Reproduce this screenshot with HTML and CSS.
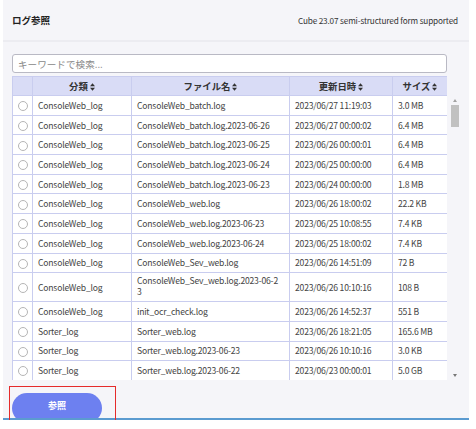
FILE: index.html
```html
<!DOCTYPE html>
<html lang="ja">
<head>
    <meta charset="UTF-8">
    <meta name="viewport" content="width=device-width, initial-scale=1.0">
    <title>ログ参照</title>
    <link rel="stylesheet" href="styles.css">
</head>
<body>
    <div class="panel">
        <div class="panel-head">
            <h1>ログ参照</h1>
            <span class="version">Cube 23.07 semi-structured form supported</span>
        </div>
        <div class="panel-body">
            <input type="text" class="search" placeholder="キーワードで検索...">
            <div class="table-area">
                <div class="table-box">
                    <table class="log-table">
                        <colgroup>
                            <col class="c-radio">
                            <col class="c-type">
                            <col class="c-file">
                            <col class="c-date">
                            <col class="c-size">
                        </colgroup>
                        <thead>
                            <tr>
                                <th></th>
                                <th>分類<svg class="sort" viewBox="0 0 6 9"><path d="M3 0 6 3.6H0z M3 9 0 5.4h6z"/></svg></th>
                                <th>ファイル名<svg class="sort" viewBox="0 0 6 9"><path d="M3 0 6 3.6H0z M3 9 0 5.4h6z"/></svg></th>
                                <th>更新日時<svg class="sort" viewBox="0 0 6 9"><path d="M3 0 6 3.6H0z M3 9 0 5.4h6z"/></svg></th>
                                <th>サイズ<svg class="sort" viewBox="0 0 6 9"><path d="M3 0 6 3.6H0z M3 9 0 5.4h6z"/></svg></th>
                            </tr>
                        </thead>
                        <tbody>
                            <tr><td><span class="radio"></span></td><td>ConsoleWeb_log</td><td>ConsoleWeb_batch.log</td><td>2023/06/27 11:19:03</td><td>3.0 MB</td></tr>
                            <tr><td><span class="radio"></span></td><td>ConsoleWeb_log</td><td>ConsoleWeb_batch.log.2023-06-26</td><td>2023/06/27 00:00:02</td><td>6.4 MB</td></tr>
                            <tr><td><span class="radio"></span></td><td>ConsoleWeb_log</td><td>ConsoleWeb_batch.log.2023-06-25</td><td>2023/06/26 00:00:01</td><td>6.4 MB</td></tr>
                            <tr><td><span class="radio"></span></td><td>ConsoleWeb_log</td><td>ConsoleWeb_batch.log.2023-06-24</td><td>2023/06/25 00:00:00</td><td>6.4 MB</td></tr>
                            <tr><td><span class="radio"></span></td><td>ConsoleWeb_log</td><td>ConsoleWeb_batch.log.2023-06-23</td><td>2023/06/24 00:00:00</td><td>1.8 MB</td></tr>
                            <tr><td><span class="radio"></span></td><td>ConsoleWeb_log</td><td>ConsoleWeb_web.log</td><td>2023/06/26 18:00:02</td><td>22.2 KB</td></tr>
                            <tr><td><span class="radio"></span></td><td>ConsoleWeb_log</td><td>ConsoleWeb_web.log.2023-06-23</td><td>2023/06/25 10:08:55</td><td>7.4 KB</td></tr>
                            <tr><td><span class="radio"></span></td><td>ConsoleWeb_log</td><td>ConsoleWeb_web.log.2023-06-24</td><td>2023/06/25 18:00:02</td><td>7.4 KB</td></tr>
                            <tr><td><span class="radio"></span></td><td>ConsoleWeb_log</td><td>ConsoleWeb_Sev_web.log</td><td>2023/06/26 14:51:09</td><td>72 B</td></tr>
                            <tr class="tall"><td><span class="radio"></span></td><td>ConsoleWeb_log</td><td class="wrap">ConsoleWeb_Sev_web.log.2023-06-2<br>3</td><td>2023/06/26 10:10:16</td><td>108 B</td></tr>
                            <tr><td><span class="radio"></span></td><td>ConsoleWeb_log</td><td>init_ocr_check.log</td><td>2023/06/26 14:52:37</td><td>551 B</td></tr>
                            <tr><td><span class="radio"></span></td><td>Sorter_log</td><td>Sorter_web.log</td><td>2023/06/26 18:21:05</td><td>165.6 MB</td></tr>
                            <tr><td><span class="radio"></span></td><td>Sorter_log</td><td>Sorter_web.log.2023-06-23</td><td>2023/06/26 10:10:16</td><td>3.0 KB</td></tr>
                            <tr><td><span class="radio"></span></td><td>Sorter_log</td><td>Sorter_web.log.2023-06-22</td><td>2023/06/23 00:00:01</td><td>5.0 GB</td></tr>
                        </tbody>
                    </table>
                </div>
                <div class="scrollbar">
                    <span class="arrow up"></span>
                    <span class="thumb"></span>
                    <span class="track"></span>
                    <span class="arrow down"></span>
                </div>
            </div>
            <div class="actions">
                <button class="view-btn">参照</button>
            </div>
        </div>
        <div class="mark"></div>
    </div>
</body>
</html>
```

FILE: styles.css
```css
body {
    margin: 0;
    background-color: #fff;
    font-family: "Noto Sans CJK JP", "Noto Sans", sans-serif;
    color: #444;
}
.panel {
    position: relative;
    width: 466px;
    margin-left: 3px;
    background-color: #f5f5f9;
    border-bottom: 2px solid #5b9bd0;
}
.panel-head {
    display: flex;
    justify-content: space-between;
    align-items: center;
    height: 40px;
    padding: 0 11px 0 9px;
    border-bottom: 2px solid #ececf1;
}
.panel-head h1 {
    margin: 0;
    font-size: 9.5px;
    font-weight: bold;
    color: #222;
}
.version {
    font-size: 8.2px;
    letter-spacing: -0.15px;
    color: #333;
}
.panel-body {
    padding: 12px 0 0 9px;
}
.search {
    display: block;
    box-sizing: border-box;
    width: 435px;
    height: 19px;
    margin: 0;
    padding: 0 5px;
    border: 1px solid #b9b9c4;
    border-radius: 3px;
    background-color: #fff;
    font-family: inherit;
    font-size: 9.6px;
}
.search::placeholder {
    color: #888;
}
.table-area {
    display: flex;
    margin-top: 3px;
}
.table-box {
    width: 435px;
    height: 304px;
    overflow: hidden;
}
.log-table {
    width: 435px;
    table-layout: fixed;
    border-collapse: collapse;
    font-size: 8.6px;
    letter-spacing: -0.2px;
}
.c-radio { width: 20px; }
.c-type { width: 99px; }
.c-file { width: 158px; }
.c-date { width: 103px; }
.c-size { width: 55px; }
.log-table th,
.log-table td {
    border: 1px solid #c9cdef;
    padding: 0 5px;
    height: 18.7px;
    white-space: nowrap;
    overflow: hidden;
    line-height: 11px;
}
.log-table th {
    height: 18px;
    background-color: #d9dcf6;
    color: #333;
    font-weight: bold;
    font-size: 9.4px;
    letter-spacing: 0;
    text-align: center;
}
.log-table td {
    background-color: #fff;
}
.log-table .tall td {
    height: 26px;
}
.log-table td.wrap {
    vertical-align: top;
    padding-top: 2px;
    line-height: 11px;
}
.log-table td:first-child {
    padding: 0;
    text-align: center;
}
.sort {
    width: 5px;
    height: 8px;
    margin-left: 2px;
    vertical-align: -1px;
    fill: #333;
}
.radio {
    display: inline-block;
    width: 8px;
    height: 8px;
    border: 1px solid #b5b5b5;
    border-radius: 50%;
    vertical-align: middle;
}
.scrollbar {
    display: flex;
    flex-direction: column;
    align-items: center;
    width: 15px;
    height: 284px;
    margin-top: 20px;
}
.arrow {
    width: 0;
    height: 0;
    margin: 3px 0;
    border-left: 2px solid transparent;
    border-right: 2px solid transparent;
}
.arrow.up {
    border-bottom: 3px solid #a3a3a3;
}
.arrow.down {
    border-top: 3px solid #777;
}
.thumb {
    width: 8px;
    height: 22px;
    background-color: #c1c1c1;
}
.track {
    flex: 1;
}
.actions {
    height: 25px;
    padding-top: 13px;
    overflow: hidden;
}
.view-btn {
    display: block;
    width: 90px;
    height: 30px;
    border: none;
    border-radius: 15px;
    background-color: #6d80f0;
    color: #fff;
    font-family: inherit;
    font-size: 9px;
    font-weight: bold;
    line-height: 25px;
    padding: 0 0 5px;
}
.mark {
    position: absolute;
    left: 6px;
    bottom: -8px;
    width: 105px;
    height: 38px;
    border: 1px solid #e52b2b;
}
```
